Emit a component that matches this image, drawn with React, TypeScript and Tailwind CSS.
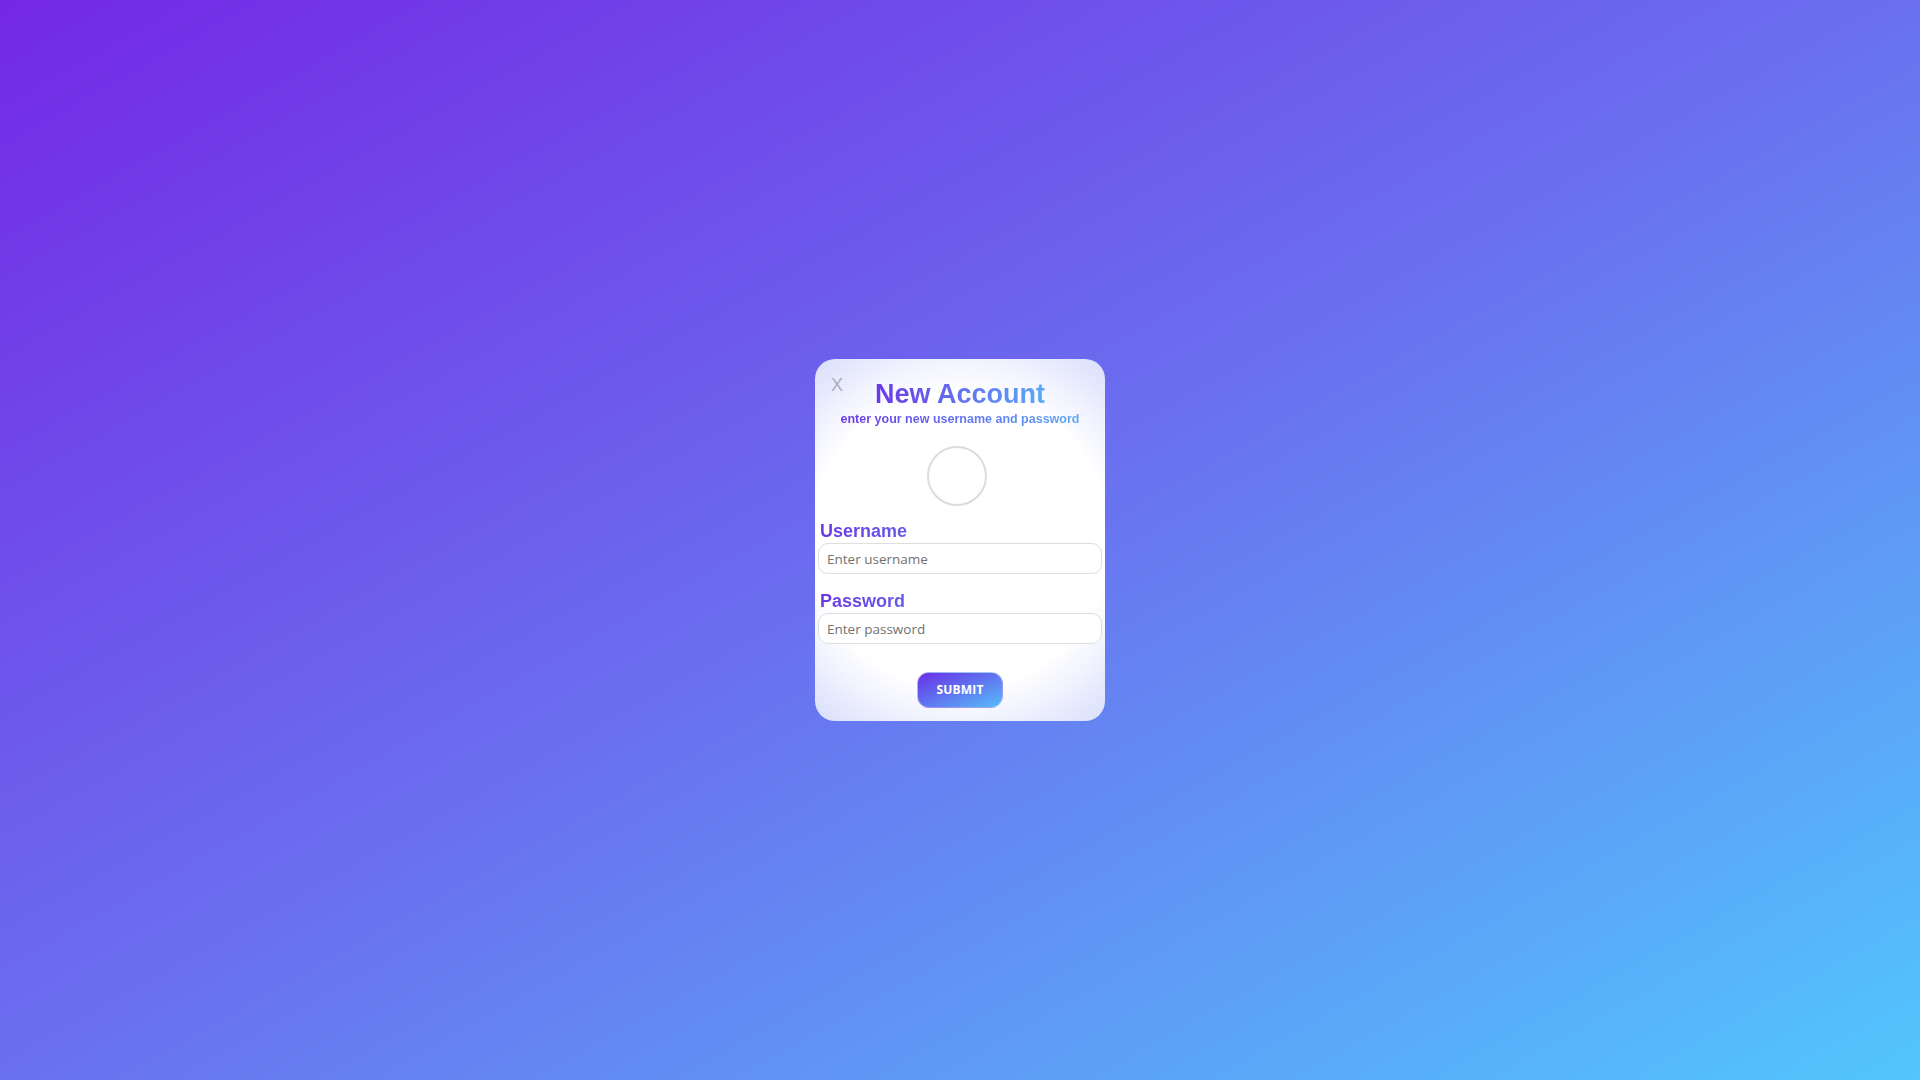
import React from "react";

const gradText =
  "bg-[linear-gradient(to_right,#6b38e6,#5aa9f6)] bg-clip-text text-transparent";

// labels span the full row, so the short words only pick up the purple end
const labelGrad =
  "block w-full bg-[linear-gradient(to_right,#6a38e6,#5aa9f6)] bg-clip-text text-transparent";

export default function App() {
  return (
    <div className="flex h-screen w-full items-center justify-center bg-[linear-gradient(to_bottom_right,#7428e5,#6a70ef_50%,#52c6fd)] font-['Liberation_Sans',Arial,sans-serif]">
      <div className="relative flex w-[290px] flex-col rounded-[20px] bg-[radial-gradient(circle,#ffffff_64%,#d9defc_100%)] px-[3px] pb-[13px] pt-[21px]">
        <button className="absolute left-[16px] top-[17px] text-[18px] leading-none text-[#aeaeb6]">
          X
        </button>

        <h1 className="self-center text-center">
          <span className={`${gradText} text-[27px] font-bold leading-[28px]`}>
            New Account
          </span>
        </h1>
        <p className="-mt-[4px] self-center text-center">
          <span className={`${gradText} text-[12.5px] font-bold leading-[14px]`}>
            enter your new username and password
          </span>
        </p>

        <div className="mt-[16px] h-[60px] w-[60px] self-center rounded-full border-2 border-[#dcdcdc] -translate-x-[3px]" />

        <label className="ml-[2px] mt-[15px]">
          <span className={`${labelGrad} text-[18px] font-bold leading-[21px]`}>
            Username
          </span>
        </label>
        <input
          type="text"
          placeholder="Enter username"
          className="mt-[1px] h-[31px] w-full rounded-[10px] border border-[#dedede] bg-white px-[8px] font-['Open_Sans',sans-serif] text-[13.5px] text-[#333] outline-none placeholder:text-[#727272]"
        />

        <label className="ml-[2px] mt-[17px]">
          <span className={`${labelGrad} text-[18px] font-bold leading-[21px]`}>
            Password
          </span>
        </label>
        <input
          type="password"
          placeholder="Enter password"
          className="mt-[1px] h-[31px] w-full rounded-[10px] border border-[#dedede] bg-white px-[8px] font-['Open_Sans',sans-serif] text-[13.5px] text-[#333] outline-none placeholder:text-[#727272]"
        />

        <button className="mt-[28px] h-[36px] w-[86px] self-center rounded-[12px] border border-white/40 bg-[linear-gradient(to_bottom_right,#6a2ee6,#56bdfa)] font-['Open_Sans',sans-serif] text-[12px] font-bold tracking-[0.2px] text-white">
          SUBMIT
        </button>
      </div>
    </div>
  );
}
